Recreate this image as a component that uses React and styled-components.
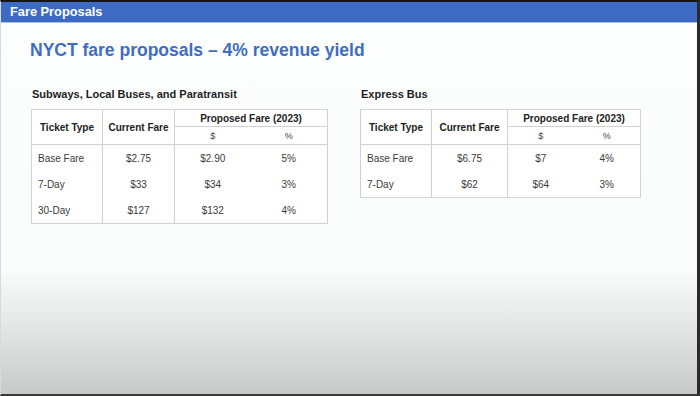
import React from 'react';
import styled, { createGlobalStyle } from 'styled-components';

const GlobalStyle = createGlobalStyle`
  html, body {
    margin: 0;
    padding: 0;
    background: #1b1b1b;
  }
  body {
    font-family: "Liberation Sans", Arial, sans-serif;
  }
`;

const Slide = styled.div`
  width: 700px;
  height: 396px;
  box-sizing: border-box;
  border-top: 2px solid #161616;
  border-right: 3px solid #2b2b2b;
  border-bottom: 2px solid #3a3a3a;
  border-left: 1px solid #d8dada;
  display: flex;
  flex-direction: column;
  background: linear-gradient(
    to bottom,
    #fcfefe 0px,
    #fbfdfd 265px,
    #e6e7e7 320px,
    #c7c8c8 394px
  );
  overflow: hidden;
`;

const TitleBar = styled.div`
  height: 20px;
  background: #3d6bc4;
  border-bottom: 1px solid #a8c0e8;
  color: #ffffff;
  font-weight: 700;
  font-size: 12.8px;
  line-height: 20px;
  padding-left: 9px;
`;

const Heading = styled.h1`
  margin: 17px 0 0 29px;
  color: #3f6dc4;
  font-size: 17.5px;
  font-weight: 700;
  line-height: 20px;
`;

const Tables = styled.div`
  display: flex;
  gap: 32px;
  margin: 28px 0 0 30px;
  align-items: flex-start;
`;

const Block = styled.div`
  display: flex;
  flex-direction: column;
`;

const BlockTitle = styled.h2`
  margin: 0 0 9px 1px;
  font-size: 11px;
  font-weight: 700;
  color: #1e1e1e;
  line-height: 12px;
`;

const Table = styled.table`
  border-collapse: collapse;
  table-layout: fixed;
  width: ${(p) => p.$width}px;
  border: 1px solid #d2d2d2;
  font-size: 10px;
  color: #3a3a3a;
  background: #ffffff;
`;

const Th = styled.th`
  text-align: center;
  padding: 0;
  height: ${(p) => p.$h || 17}px;
  border-left: ${(p) => (p.$noLeft ? 'none' : '1px solid #d2d2d2')};
  border-bottom: 1px solid #d2d2d2;
  font-size: ${(p) => (p.$sub ? '9px' : '10px')};
  font-weight: ${(p) => (p.$sub ? 400 : 700)};
  color: ${(p) => (p.$sub ? '#444' : '#222')};
`;

const Td = styled.td`
  height: 26px;
  padding: 0 0 0 ${(p) => (p.$left ? 6 : 0)}px;
  text-align: ${(p) => (p.$left ? 'left' : 'center')};
  border-left: ${(p) => (p.$line ? '1px solid #d2d2d2' : 'none')};
`;

const FareTable = ({ cols, rows }) => {
  const total = cols.reduce((a, b) => a + b, 0);
  return (
    <Table $width={total}>
      <colgroup>
        {cols.map((w, i) => (
          <col key={i} style={{ width: w }} />
        ))}
      </colgroup>
      <thead>
        <tr>
          <Th rowSpan={2} $noLeft>Ticket Type</Th>
          <Th rowSpan={2}>Current Fare</Th>
          <Th colSpan={2} $h={16}>Proposed Fare (2023)</Th>
        </tr>
        <tr>
          <Th $sub $h={17}>$</Th>
          <Th $sub $noLeft $h={17}>%</Th>
        </tr>
      </thead>
      <tbody>
        {rows.map((r) => (
          <tr key={r[0]}>
            <Td $left>{r[0]}</Td>
            <Td $line>{r[1]}</Td>
            <Td $line>{r[2]}</Td>
            <Td>{r[3]}</Td>
          </tr>
        ))}
      </tbody>
    </Table>
  );
};

const subwayRows = [
  ['Base Fare', '$2.75', '$2.90', '5%'],
  ['7-Day', '$33', '$34', '3%'],
  ['30-Day', '$127', '$132', '4%'],
];

const expressRows = [
  ['Base Fare', '$6.75', '$7', '4%'],
  ['7-Day', '$62', '$64', '3%'],
];

export default function App() {
  return (
    <>
      <GlobalStyle />
      <Slide>
        <TitleBar>Fare Proposals</TitleBar>
        <Heading>NYCT fare proposals – 4% revenue yield</Heading>
        <Tables>
          <Block>
            <BlockTitle>Subways, Local Buses, and Paratransit</BlockTitle>
            <FareTable cols={[71, 72, 76, 77]} rows={subwayRows} />
          </Block>
          <Block>
            <BlockTitle>Express Bus</BlockTitle>
            <FareTable cols={[71, 76, 66, 67]} rows={expressRows} />
          </Block>
        </Tables>
      </Slide>
    </>
  );
}
